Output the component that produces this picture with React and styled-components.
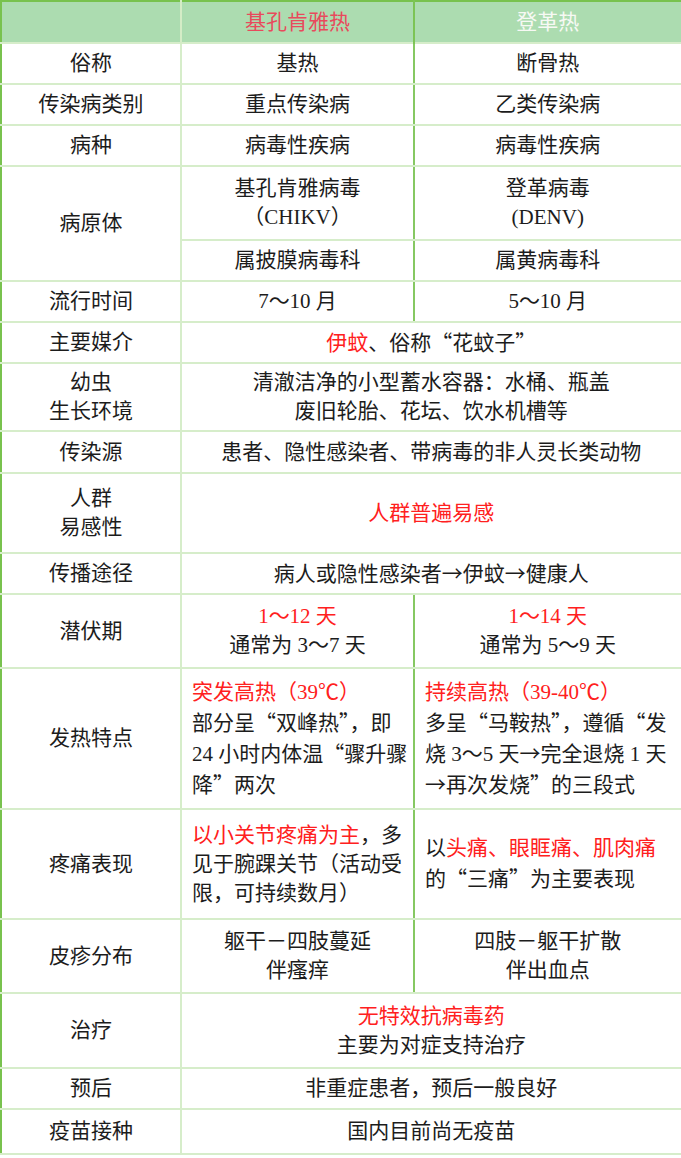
import styled, { createGlobalStyle } from "styled-components";

const GlobalStyle = createGlobalStyle`
  body {
    margin: 0;
    background: #ffffff;
    font-family: "Liberation Serif", "Noto Sans CJK SC", serif;
    color: #1c1c1c;
  }
`;

const App = () => {
  return (
    <>
      <GlobalStyle />
      <Table>
        <colgroup>
          <col style={{ width: 180 }} />
          <col style={{ width: 233 }} />
          <col style={{ width: 268 }} />
        </colgroup>
        <thead>
          <HeadRow>
            <HeadCell />
            <HeadCell tone="#e84a5c" divide>基孔肯雅热</HeadCell>
            <HeadCell tone="#f7f9f4">登革热</HeadCell>
          </HeadRow>
        </thead>
        <tbody>
          <Row h={41}>
            <Label>俗称</Label>
            <Cell divide>基热</Cell>
            <Cell>断骨热</Cell>
          </Row>
          <Row h={41}>
            <Label>传染病类别</Label>
            <Cell divide>重点传染病</Cell>
            <Cell>乙类传染病</Cell>
          </Row>
          <Row h={41}>
            <Label>病种</Label>
            <Cell divide>病毒性疾病</Cell>
            <Cell>病毒性疾病</Cell>
          </Row>
          <Row h={74}>
            <Label rowSpan={2}>病原体</Label>
            <Cell divide>基孔肯雅病毒<br />（CHIKV）</Cell>
            <Cell>登革病毒<br />(DENV)</Cell>
          </Row>
          <Row h={41}>
            <Cell divide>属披膜病毒科</Cell>
            <Cell>属黄病毒科</Cell>
          </Row>
          <Row h={41}>
            <Label>流行时间</Label>
            <Cell divide>7～10 月</Cell>
            <Cell>5～10 月</Cell>
          </Row>
          <Row h={41}>
            <Label>主要媒介</Label>
            <Cell colSpan={2}><Red>伊蚊</Red>、俗称<Wide>“</Wide>花蚊子<Wide>”</Wide></Cell>
          </Row>
          <Row h={68}>
            <Label>幼虫<br />生长环境</Label>
            <Cell colSpan={2}>清澈洁净的小型蓄水容器：水桶、瓶盖<br />废旧轮胎、花坛、饮水机槽等</Cell>
          </Row>
          <Row h={42}>
            <Label>传染源</Label>
            <Cell colSpan={2}>患者、隐性感染者、带病毒的非人灵长类动物</Cell>
          </Row>
          <Row h={80}>
            <Label>人群<br />易感性</Label>
            <Cell colSpan={2}><Red>人群普遍易感</Red></Cell>
          </Row>
          <Row h={41}>
            <Label>传播途径</Label>
            <Cell colSpan={2}>病人或隐性感染者<Wide>→</Wide>伊蚊<Wide>→</Wide>健康人</Cell>
          </Row>
          <Row h={74}>
            <Label>潜伏期</Label>
            <Cell divide><Red>1～12 天</Red><br />通常为 3～7 天</Cell>
            <Cell><Red>1～14 天</Red><br />通常为 5～9 天</Cell>
          </Row>
          <Row h={141}>
            <Label>发热特点</Label>
            <Cell divide left>
              <Red>突发高热（39℃）</Red><br />
              部分呈<Wide>“</Wide>双峰热<Wide>”</Wide>，即<br />
              24 小时内体温<Wide>“</Wide>骤升骤<br />
              降<Wide>”</Wide>两次
            </Cell>
            <Cell left>
              <Red>持续高热（39-40℃）</Red><br />
              多呈<Wide>“</Wide>马鞍热<Wide>”</Wide>，遵循<Wide>“</Wide>发<br />
              烧 3～5 天<Wide>→</Wide>完全退烧 1 天<br />
              <Wide>→</Wide>再次发烧<Wide>”</Wide>的三段式
            </Cell>
          </Row>
          <Row h={110}>
            <Label>疼痛表现</Label>
            <Cell divide left>
              <Red>以小关节疼痛为主</Red>，多<br />
              见于腕踝关节（活动受<br />
              限，可持续数月）
            </Cell>
            <Cell left>
              以<Red>头痛、眼眶痛、肌肉痛</Red><br />
              的<Wide>“</Wide>三痛<Wide>”</Wide>为主要表现
            </Cell>
          </Row>
          <Row h={74}>
            <Label>皮疹分布</Label>
            <Cell divide>躯干－四肢蔓延<br />伴瘙痒</Cell>
            <Cell>四肢－躯干扩散<br />伴出血点</Cell>
          </Row>
          <Row h={75}>
            <Label>治疗</Label>
            <Cell colSpan={2}><Red>无特效抗病毒药</Red><br />主要为对症支持治疗</Cell>
          </Row>
          <Row h={41}>
            <Label>预后</Label>
            <Cell colSpan={2}>非重症患者，预后一般良好</Cell>
          </Row>
          <Row h={45}>
            <Label>疫苗接种</Label>
            <Cell colSpan={2}>国内目前尚无疫苗</Cell>
          </Row>
        </tbody>
      </Table>
    </>
  );
};

const Table = styled.table`
  width: 681px;
  table-layout: fixed;
  border-collapse: collapse;
  border-top: 2px solid #78c24e;
  border-left: 2px solid #78c24e;
  border-right: 3px solid #d4ecc6;
  border-bottom: 2px solid #78c24e;
  font-size: 21px;
  line-height: 29px;
`;

const HeadRow = styled.tr`
  height: 42px;
  background: #acdcb0;
  border-bottom: 2px solid #78c24e;
`;

const HeadCell = styled.th`
  padding: 0;
  font-weight: normal;
  text-align: center;
  vertical-align: middle;
  color: ${(p) => p.tone || "#1c1c1c"};
  border-right: 2px solid ${(p) => (p.divide ? "#7cc455" : "#d4ecc6")};
`;

const Row = styled.tr`
  height: ${(p) => p.h}px;
`;

const Label = styled.td`
  padding: 0;
  text-align: center;
  vertical-align: middle;
  border: 2px solid #d6edca;
  border-left: none;
`;

const Cell = styled.td`
  padding: ${(p) => (p.left ? "0 4px 0 10px" : "0")};
  text-align: ${(p) => (p.left ? "left" : "center")};
  vertical-align: middle;
  border: 2px solid #d6edca;
  border-right: 2px solid ${(p) => (p.divide ? "#86c862" : "#d6edca")};
  white-space: nowrap;
`;

const Red = styled.span`
  color: #ff2020;
`;

const Wide = styled.span`
  font-family: "Noto Sans CJK SC", sans-serif;
`;

export default App;
